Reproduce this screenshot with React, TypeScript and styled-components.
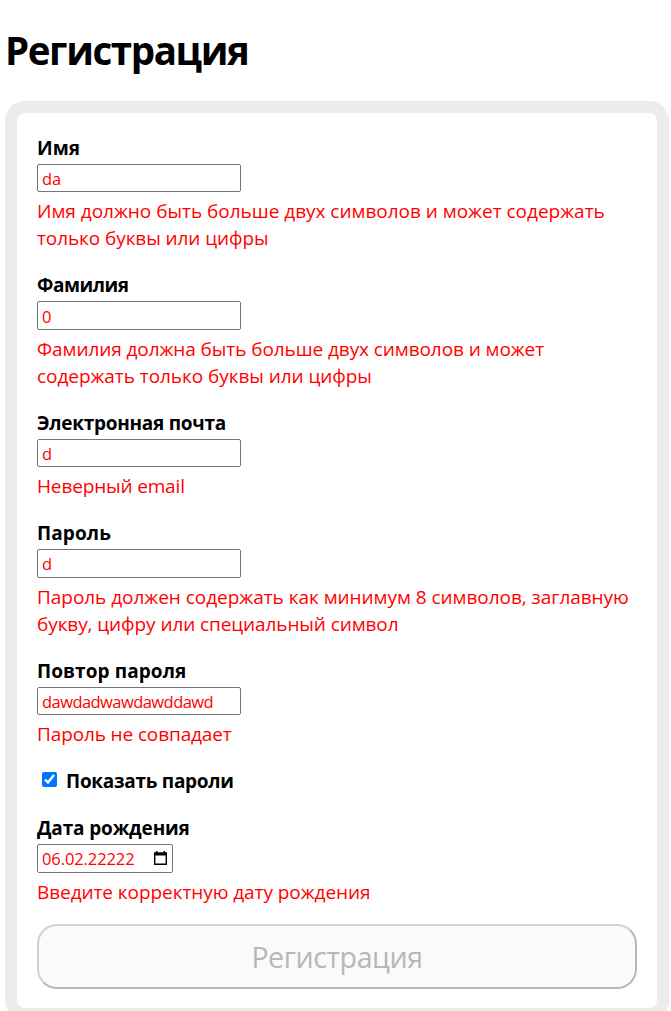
import React from "react";
import styled, { createGlobalStyle } from "styled-components";

const GlobalStyle = createGlobalStyle`
  *, *::before, *::after { box-sizing: border-box; }
  html, body { margin: 0; background: #fff; }
  body { font-family: "Segoe UI", "Open Sans", "Noto Sans", sans-serif; }
`;

const Page = styled.main`
  height: 1011px;
  padding: 20px 2px 0 5px;
  overflow: hidden;
`;

const Title = styled.h1`
  margin: 0 0 21px;
  height: 60px;
  font-size: 38.5px;
  line-height: 60px;
  font-weight: 700;
  letter-spacing: -1.4px;
  color: #000;
  white-space: nowrap;
`;

const Form = styled.form`
  height: 919px;
  padding: 20px;
  border: 12px solid #ececec;
  border-radius: 20px;
`;

const Field = styled.div<{ $height: number }>`
  display: flex;
  flex-direction: column;
  align-items: flex-start;
  height: ${(p) => p.$height}px;
`;

const Label = styled.label<{ $spacing?: number }>`
  height: 31px;
  font-size: 19px;
  line-height: 30px;
  font-weight: 700;
  letter-spacing: ${(p) => p.$spacing ?? 0}px;
  white-space: nowrap;
`;

const Control = styled.div<{ $width: number }>`
  display: flex;
  align-items: center;
  flex: none;
  width: ${(p) => p.$width}px;
  height: 28.4px;
  padding: 0 5px 0 4px;
  border: 1px solid #767676;
  border-radius: 2px;
`;

const Input = styled.input<{ $spacing?: number }>`
  flex: 1;
  min-width: 0;
  height: 24px;
  padding: 1px 0 0;
  border: 0;
  outline: 0;
  background: transparent;
  color: #f00;
  font: 400 16.5px/23px "Open Sans", "Noto Sans", sans-serif;
  letter-spacing: ${(p) => p.$spacing ?? 0}px;
`;

const ErrorText = styled.div`
  margin-top: 6px;
  color: #f00;
  font-weight: 400;
  font-size: 19px;
  line-height: 27px;
`;

const Line = styled.div<{ $spacing: number }>`
  letter-spacing: ${(p) => p.$spacing}px;
  white-space: nowrap;
`;

const CheckRow = styled.div`
  display: flex;
  align-items: flex-start;
  height: 47px;
`;

const Checkbox = styled.input`
  width: 15px;
  height: 15px;
  margin: 6px 9px 0 5px;
`;

const Submit = styled.button`
  display: block;
  width: 100%;
  height: 65px;
  padding: 0;
  border: 2px solid;
  border-color: #d1d1d1 #b8b8b8 #b8b8b8 #d1d1d1;
  border-radius: 20px;
  background: #fafafa;
  color: #b7b7b7;
  font: 400 28.5px/62px "Open Sans", "Noto Sans", sans-serif;
  letter-spacing: -0.4px;
`;

type FieldData = {
  id: string;
  label: string;
  labelSpacing: number;
  value: string;
  valueSpacing?: number;
  errors: [string, number][];
  height: number;
  date?: boolean;
};

const accountFields: FieldData[] = [
  { id: "name", label: "Имя", labelSpacing: 0, value: "da", height: 137.4,
    errors: [["Имя должно быть больше двух символов и может содержать", -0.02], ["только буквы или цифры", -0.09]] },
  { id: "surname", label: "Фамилия", labelSpacing: -0.45, value: "0", height: 137.5,
    errors: [["Фамилия должна быть больше двух символов и может", -0.08], ["содержать только буквы или цифры", -0.06]] },
  { id: "email", label: "Электронная почта", labelSpacing: -0.27, value: "d", height: 110.4,
    errors: [["Неверный email", -0.15]] },
  { id: "password", label: "Пароль", labelSpacing: 0.1, value: "d", height: 137.5,
    errors: [["Пароль должен содержать как минимум 8 символов, заглавную", -0.04], ["букву, цифру или специальный символ", -0.09]] },
  { id: "repeat", label: "Повтор пароля", labelSpacing: 0.08, value: "dawdadwawdawddawd", valueSpacing: -0.55, height: 110.4,
    errors: [["Пароль не совпадает", -0.12]] },
];

const birthField: FieldData = {
  id: "birth", label: "Дата рождения", labelSpacing: -0.15, value: "06.02.22222", valueSpacing: -0.1, height: 111, date: true,
  errors: [["Введите корректную дату рождения", -0.07]],
};

const CalendarIcon = () => (
  <svg width="13" height="15" viewBox="0 0 13 15" fill="#000" aria-hidden="true">
    <path fillRule="evenodd" d="M2 0h1.5v1.2h6V0H11v1.2h2V14H0V1.2h2zM1.4 4.5v8.1h10.2V4.5z" />
  </svg>
);

function FormField({ field }: { field: FieldData }) {
  return (
    <Field $height={field.height}>
      <Label htmlFor={field.id} $spacing={field.labelSpacing}>{field.label}</Label>
      <Control $width={field.date ? 136 : 204}>
        <Input id={field.id} defaultValue={field.value} $spacing={field.valueSpacing} />
        {field.date && <CalendarIcon />}
      </Control>
      <ErrorText>
        {field.errors.map(([text, spacing]) => (
          <Line key={text} $spacing={spacing}>{text}</Line>
        ))}
      </ErrorText>
    </Field>
  );
}

export default function App() {
  return (
    <Page>
      <GlobalStyle />
      <Title>Регистрация</Title>
      <Form>
        {accountFields.map((field) => <FormField key={field.id} field={field} />)}
        <CheckRow>
          <Checkbox id="show" type="checkbox" defaultChecked />
          <Label htmlFor="show" $spacing={-0.28}>Показать пароли</Label>
        </CheckRow>
        <FormField field={birthField} />
        <Submit type="button" disabled>Регистрация</Submit>
      </Form>
    </Page>
  );
}
